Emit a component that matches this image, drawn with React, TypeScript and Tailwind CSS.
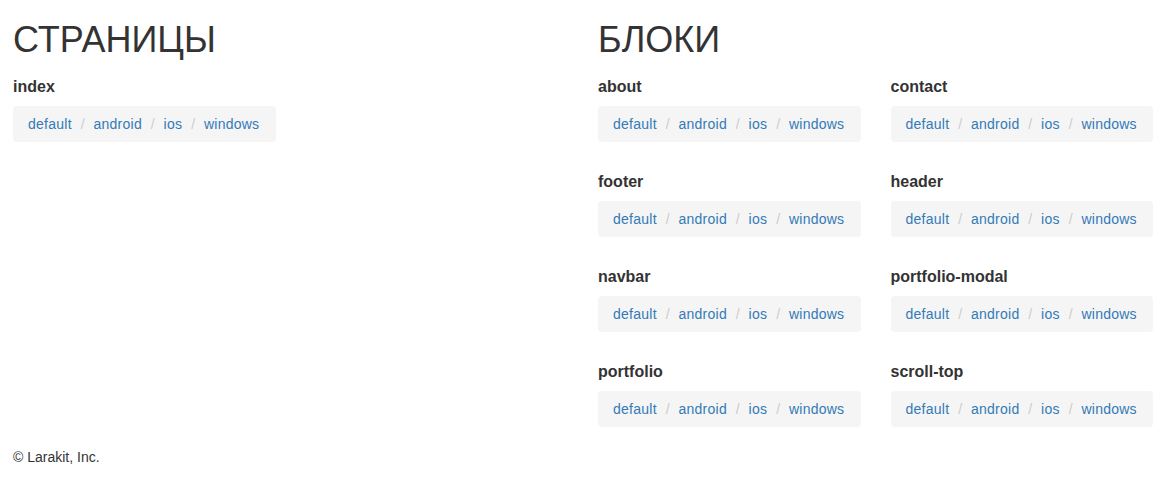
const platforms = ["default", "android", "ios", "windows"];

const blocks = [
  "about",
  "contact",
  "footer",
  "header",
  "navbar",
  "portfolio-modal",
  "portfolio",
  "scroll-top",
];

function Crumbs() {
  return (
    <ol className="mb-[20px] whitespace-nowrap rounded-[4px] bg-[#f5f5f5] px-[15px] py-[8px] text-[14px] leading-[20px]">
      {platforms.map((p, i) => (
        <>
          {i > 0 && " "}
          <li key={p} className="inline-block">
            {i > 0 && <span className="px-[5px] text-[#ccc]">/{"\u00a0"}</span>}
            <a href="#" className="tracking-[0.25px] text-[#337ab7]">
              {p}
            </a>
          </li>
        </>
      ))}
    </ol>
  );
}

function Item({ name }: { name: string }) {
  return (
    <div>
      <h4 className="mt-[10px] mb-[10px] text-[16px] font-bold leading-[19px]">{name}</h4>
      <Crumbs />
    </div>
  );
}

export default function App() {
  return (
    <div className="min-h-screen bg-white pl-[13px] pr-[15px] pt-[20px] font-['Liberation_Sans',Arial,sans-serif] text-[14px] text-[#333]">
      <div className="grid grid-cols-2 gap-x-[30px]">
        <div>
          <h1 className="mb-[7px] text-[36px] leading-[1.1]">СТРАНИЦЫ</h1>
          <div className="grid grid-cols-2 gap-x-[30px]">
            <Item name="index" />
          </div>
        </div>
        <div>
          <h1 className="mb-[7px] text-[36px] leading-[1.1]">БЛОКИ</h1>
          <div className="grid grid-cols-2 gap-x-[30px]">
            {blocks.map((b) => (
              <Item key={b} name={b} />
            ))}
          </div>
        </div>
      </div>
      <footer>
        <p className="leading-[20px]">© Larakit, Inc.</p>
      </footer>
    </div>
  );
}
